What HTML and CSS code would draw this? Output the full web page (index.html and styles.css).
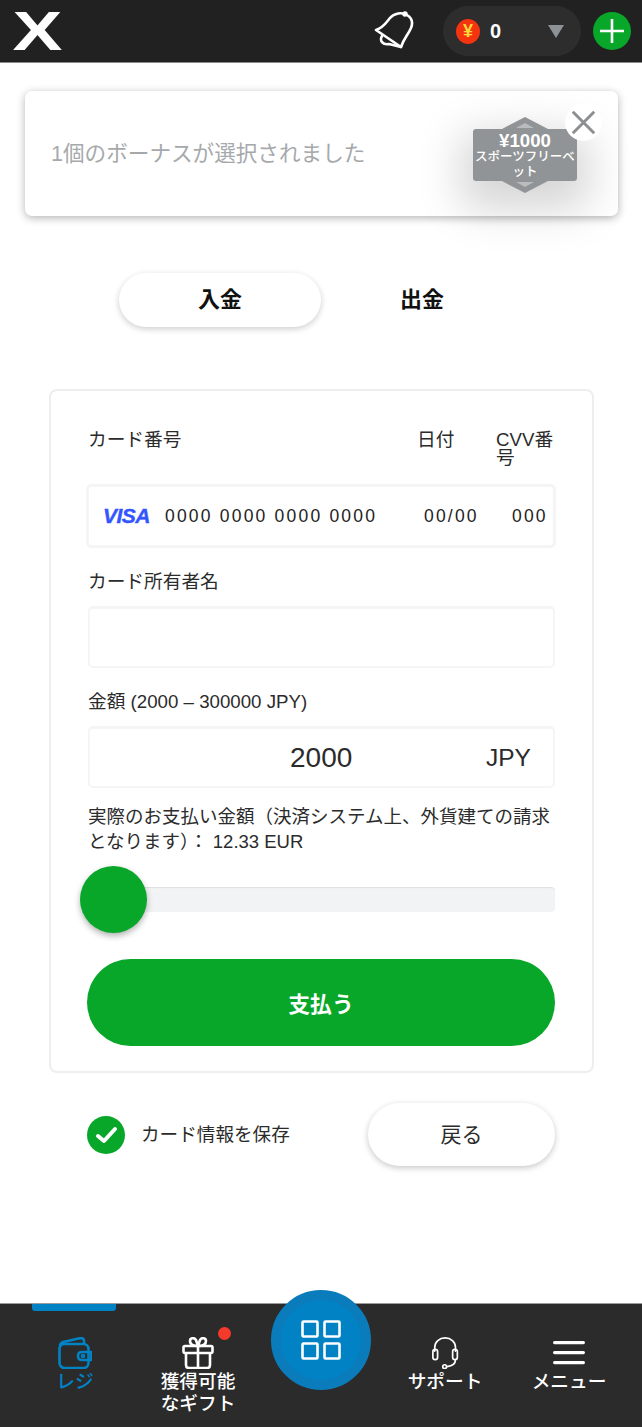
FILE: index.html
```html
<!DOCTYPE html>
<html lang="ja">
    <head>
        <meta charset="UTF-8">
        <meta name="viewport" content="width=device-width, initial-scale=1.0">
        <title>レジ</title>
        <link rel="stylesheet" href="styles.css">
    </head>
    <body>
        <header class="topbar">
            <span class="logo">X</span>
            <svg class="bell" viewBox="0 0 40 40" fill="none" stroke="#fff" stroke-width="2.6" stroke-linejoin="round" stroke-linecap="round">
                <path d="M2 19C9 17 12 12 16 7C20 2 28 1 33 4C38 7 39 12 37 17C34 24 30 27 27 36Z"/>
                <path d="M8 25C5 30 9 34 15 33L27 36"/>
                <circle cx="31" cy="3" r="1.4"/>
            </svg>
            <div class="balance">
                <span class="coin">¥</span>
                <span class="amount">0</span>
                <span class="arrow"></span>
            </div>
            <div class="add">
                <svg viewBox="0 0 38 38" stroke="#fff" stroke-width="2.6"><path d="M7 19H31M19 7V31"/></svg>
            </div>
        </header>

        <section class="bonus">
            <p>1個のボーナスが選択されました</p>
            <div class="tile">
                <i class="notch up"></i>
                <i class="notch down"></i>
                <b>¥1000</b>
                <span>スポーツフリーベット</span>
            </div>
            <div class="close">
                <svg viewBox="0 0 38 38" stroke="#8c8f91" stroke-width="3"><path d="M8 8L30 30M30 8L8 30"/></svg>
            </div>
        </section>

        <nav class="tabs">
            <a class="active">入金</a>
            <a>出金</a>
        </nav>

        <form class="pay">
            <div class="card-labels">
                <span class="l-num">カード番号</span>
                <span class="l-date">日付</span>
                <span class="l-cvv">CVV番号</span>
            </div>
            <div class="field card-field">
                <span class="visa">VISA</span>
                <span class="c-num">0000 0000 0000 0000</span>
                <span class="c-date">00/00</span>
                <span class="c-cvv">000</span>
            </div>

            <label>カード所有者名</label>
            <div class="field name"></div>

            <label>金額 (2000 – 300000 JPY)</label>
            <div class="field money">
                <span class="sum">2000</span>
                <span class="cur">JPY</span>
            </div>

            <p class="note">実際のお支払い金額（決済システム上、外貨建ての請求となります）：&nbsp;12.33 EUR</p>

            <div class="slider"><span class="thumb"></span></div>

            <button type="button" class="submit">支払う</button>
        </form>

        <div class="after">
            <span class="check">
                <svg viewBox="0 0 38 38" fill="none" stroke="#fff" stroke-width="4" stroke-linecap="round" stroke-linejoin="round"><path d="M11 20L17 25L28 13"/></svg>
            </span>
            <span class="save">カード情報を保存</span>
            <button type="button" class="back">戻る</button>
        </div>

        <footer class="bottom">
            <span class="marker"></span>
            <a class="item current">
                <svg viewBox="0 0 34 32" fill="none" stroke="#0082c4" stroke-width="2.6" stroke-linejoin="round">
                    <path d="M2 9C2 7 3 6 5 5L23 1C25 1 26 2 26 4V7"/>
                    <rect x="1.5" y="7" width="29" height="24" rx="5"/>
                    <path d="M33 15H24C21 15 20 17 20 19C20 21 21 23 24 23H33Z"/>
                    <circle cx="25" cy="19" r="1" />
                </svg>
                <span>レジ</span>
            </a>
            <a class="item">
                <i class="dot"></i>
                <svg viewBox="0 0 32 32" fill="none" stroke="#fff" stroke-width="2.6" stroke-linejoin="round">
                    <rect x="1.5" y="9" width="29" height="7" rx="1.5"/>
                    <path d="M4 16V28C4 30 5 31 7 31H25C27 31 28 30 28 28V16M16 9V31"/>
                    <path d="M16 9C12 9 8 8 8 4C8 1 12 0 14 3ZM16 9C20 9 24 8 24 4C24 1 20 0 18 3Z"/>
                </svg>
                <span>獲得可能<br>なギフト</span>
            </a>
            <a class="center">
                <span class="inner">
                    <svg viewBox="0 0 40 40" fill="none" stroke="#fff" stroke-width="2.6">
                        <rect x="1.5" y="1.5" width="15" height="15" rx="1"/>
                        <rect x="23.5" y="1.5" width="15" height="15" rx="1"/>
                        <rect x="1.5" y="23.5" width="15" height="15" rx="1"/>
                        <rect x="23.5" y="23.5" width="15" height="15" rx="1"/>
                    </svg>
                </span>
            </a>
            <a class="item">
                <svg viewBox="0 0 30 34" fill="none" stroke="#fff" stroke-width="1.8" stroke-linecap="round">
                    <path d="M4 15V11C4 5 9 1 15 1C21 1 26 5 26 11V15"/>
                    <rect x="2" y="13" width="5" height="11" rx="2.5"/>
                    <rect x="23" y="13" width="5" height="11" rx="2.5"/>
                    <path d="M26 24C26 29 23 31 17 31.5"/>
                    <circle cx="14.5" cy="31.5" r="2"/>
                </svg>
                <span>サポート</span>
            </a>
            <a class="item">
                <svg class="burger" viewBox="0 0 32 24" fill="#fff">
                    <rect y="0" width="32" height="3.2" rx="1.6"/>
                    <rect y="10" width="32" height="3.2" rx="1.6"/>
                    <rect y="20" width="32" height="3.2" rx="1.6"/>
                </svg>
                <span>メニュー</span>
            </a>
        </footer>
    </body>
</html>
```

FILE: styles.css
```css
* {
    box-sizing: border-box;
    font-family: "Liberation Sans", "Noto Sans CJK JP", sans-serif;
}

body {
    margin: 0;
    width: 642px;
    height: 1427px;
    display: flex;
    flex-direction: column;
    overflow: hidden;
    background: white;
    color: #2b2b2b;
}

/* top bar */
.topbar {
    height: 63px;
    flex: none;
    display: flex;
    align-items: center;
    background: #212121;
    border-bottom: 1px solid #8a8a8a;
    padding-left: 13px;
}
.logo {
    width: 49px;
    color: white;
    font-weight: bold;
    font-size: 55px;
    line-height: 62px;
    text-align: center;
    transform: scaleX(1.36);
}
.bell {
    width: 40px;
    height: 40px;
    margin-left: 312px;
}
.balance {
    width: 138px;
    height: 50px;
    margin-left: 29px;
    border-radius: 25px;
    background: #2d2d2d;
    display: flex;
    align-items: center;
    padding-left: 13px;
}
.coin {
    width: 24px;
    height: 25px;
    border-radius: 50%;
    background: #f4330f;
    color: #ffd83a;
    font-weight: bold;
    font-size: 18px;
    line-height: 25px;
    text-align: center;
}
.amount {
    margin-left: 10px;
    color: white;
    font-weight: bold;
    font-size: 20px;
}
.arrow {
    margin-left: 47px;
    border-top: 13px solid #8d9296;
    border-left: 8px solid transparent;
    border-right: 8px solid transparent;
}
.add {
    width: 38px;
    height: 38px;
    margin-left: 12px;
    border-radius: 50%;
    background: #08a729;
}
.add svg {
    display: block;
}

/* selected bonus */
.bonus {
    position: relative;
    flex: none;
    width: 593px;
    height: 125px;
    margin: 28px 0 0 25px;
    padding: 0 41px 0 26px;
    border-radius: 7px;
    background: white;
    box-shadow: 0 2px 8px rgba(0, 0, 0, 0.3);
    display: flex;
    align-items: center;
    justify-content: space-between;
}
.bonus p {
    margin: 0 0 5px;
    font-size: 21.6px;
    color: #a6a9ab;
}
.tile {
    position: relative;
    width: 104px;
    height: 52px;
    margin-top: 3px;
    border-radius: 3px;
    background: #919496;
    color: white;
    text-align: center;
    box-shadow: 0 16px 44px 12px rgba(0, 0, 0, 0.17);
    padding: 2px 1px 0;
}
.tile::before {
    content: '';
    position: absolute;
    left: 29px;
    right: 29px;
    top: -12px;
    bottom: -12px;
    background: #919496;
    clip-path: polygon(50% 0, 100% 12px, 100% calc(100% - 12px), 50% 100%, 0 calc(100% - 12px), 0 12px);
}
.notch {
    position: absolute;
    left: 43px;
    border-left: 9px solid transparent;
    border-right: 9px solid transparent;
}
.notch.up {
    top: -6px;
    border-bottom: 5px solid #b9bbbc;
}
.notch.down {
    bottom: -6px;
    border-top: 5px solid #b9bbbc;
}
.tile b, .tile span {
    position: relative;
    display: block;
}
.tile b {
    font-size: 18.7px;
    line-height: 19px;
}
.tile span {
    font-size: 12.5px;
    line-height: 15px;
    font-weight: 500;
}
.close {
    position: absolute;
    top: 13px;
    right: 16px;
    width: 37px;
    height: 37px;
    border-radius: 50%;
    background: white;
}
.close svg {
    display: block;
}

/* tabs */
.tabs {
    flex: none;
    margin: 57px 0 0 119px;
    display: flex;
}
.tabs a {
    width: 202px;
    height: 54px;
    border-radius: 27px;
    font-weight: bold;
    font-size: 22px;
    line-height: 54px;
    text-align: center;
    color: #111;
}
.tabs a.active {
    box-shadow: 0 2px 6px rgba(0, 0, 0, 0.2);
}

/* form */
.pay {
    flex: none;
    width: 545px;
    height: 684px;
    margin: 62px 0 0 49px;
    border: 2px solid #eeeeee;
    border-radius: 8px;
    padding: 40px 37px 0 36px;
}
.card-labels {
    display: flex;
    height: 36px;
    margin-bottom: 17px;
    font-size: 18.7px;
    line-height: 18px;
}
.l-num {
    width: 330px;
    padding-left: 1px;
}
.l-date {
    width: 79px;
}
.l-cvv {
    width: 58px;
}
.field {
    border: 2px solid #f5f5f5;
    border-top-width: 3px;
    border-radius: 5px;
    height: 62px;
}
.card-field {
    height: 64px;
    margin: 0 -1px;
    border-width: 3px;
    display: flex;
    align-items: center;
    font-size: 17.5px;
    letter-spacing: 2.2px;
    color: #222;
}
.visa {
    width: 76px;
    padding-left: 14px;
    color: #3355ff;
    font-weight: bold;
    font-style: italic;
    font-size: 21px;
    letter-spacing: -0.5px;
    -webkit-text-stroke: 0.4px #3355ff;
}
.c-num {
    width: 259px;
}
.c-date {
    width: 88px;
}
.pay label {
    display: block;
    margin: 23px 0 13px 1px;
    font-size: 18.7px;
    line-height: 22px;
}
.name {
    margin: 0 0 0 1px;
}
.money {
    display: flex;
    align-items: center;
    margin-left: 1px;
    padding-left: 200px;
    font-size: 24.5px;
}
.sum {
    font-size: 28px;
    width: 196px;
}
.note {
    margin: 16px 0 0 1px;
    font-size: 18.5px;
    line-height: 25px;
}
.slider {
    position: relative;
    height: 25px;
    margin-top: 33px;
    border-radius: 4px;
    background: #f2f3f5;
    box-shadow: inset 0 1px 1px rgba(0, 0, 0, 0.08);
}
.thumb {
    position: absolute;
    left: -7px;
    top: -21px;
    width: 67px;
    height: 67px;
    border-radius: 50%;
    background: #08a729;
    box-shadow: 0 3px 6px rgba(0, 0, 0, 0.3);
}
.submit {
    display: block;
    width: 468px;
    height: 87px;
    margin-top: 47px;
    border: 0;
    border-radius: 44px;
    background: #08a729;
    color: white;
    font-weight: bold;
    font-size: 21.8px;
}

/* under the form */
.after {
    flex: none;
    height: 63px;
    margin-top: 30px;
    padding: 0 87px;
    display: flex;
    align-items: center;
}
.check {
    width: 38px;
    height: 38px;
    border-radius: 50%;
    background: #08a729;
}
.check svg {
    display: block;
}
.save {
    margin: 0 0 4px 16px;
    font-size: 18.6px;
}
.back {
    margin-left: auto;
    width: 187px;
    height: 63px;
    padding-bottom: 4px;
    border: 0;
    border-radius: 32px;
    background: white;
    color: #2b2b2b;
    font-size: 21px;
    box-shadow: 0 2px 6px rgba(0, 0, 0, 0.22);
}

/* bottom nav */
.bottom {
    position: relative;
    flex: none;
    height: 124px;
    margin-top: auto;
    padding-left: 13px;
    background: #2b2b2b;
    border-top: 1px solid #9a9a9a;
    display: grid;
    grid-template-columns: 124px 122px 124px 124px 124px;
    color: white;
    font-weight: 500;
    font-size: 18.7px;
    line-height: 22px;
    text-align: center;
}
.marker {
    position: absolute;
    left: 32px;
    top: 0;
    width: 84px;
    height: 7px;
    border-radius: 0 0 3px 3px;
    background: #0082c4;
}
.item {
    position: relative;
    grid-row: 1;
    height: 100%;
    display: flex;
    flex-direction: column;
    align-items: center;
    padding-top: 33px;
}
.item svg {
    height: 32px;
    flex: none;
    margin-bottom: 2px;
}
.item svg.burger {
    height: 24px;
    margin: 4px 0 6px;
}
.item.current {
    color: #0082c4;
}
.dot {
    position: absolute;
    left: 81px;
    top: 23px;
    width: 13px;
    height: 13px;
    border-radius: 50%;
    background: #f5392b;
}
.center {
    grid-row: 1;
    position: relative;
}
.inner {
    position: absolute;
    left: 12px;
    top: -14px;
    width: 100px;
    height: 100px;
    border-radius: 50%;
    background: #0082c4;
    border: 10px solid #0a7cbb;
    display: flex;
    align-items: center;
    justify-content: center;
}
.inner svg {
    width: 40px;
    height: 40px;
}
```
